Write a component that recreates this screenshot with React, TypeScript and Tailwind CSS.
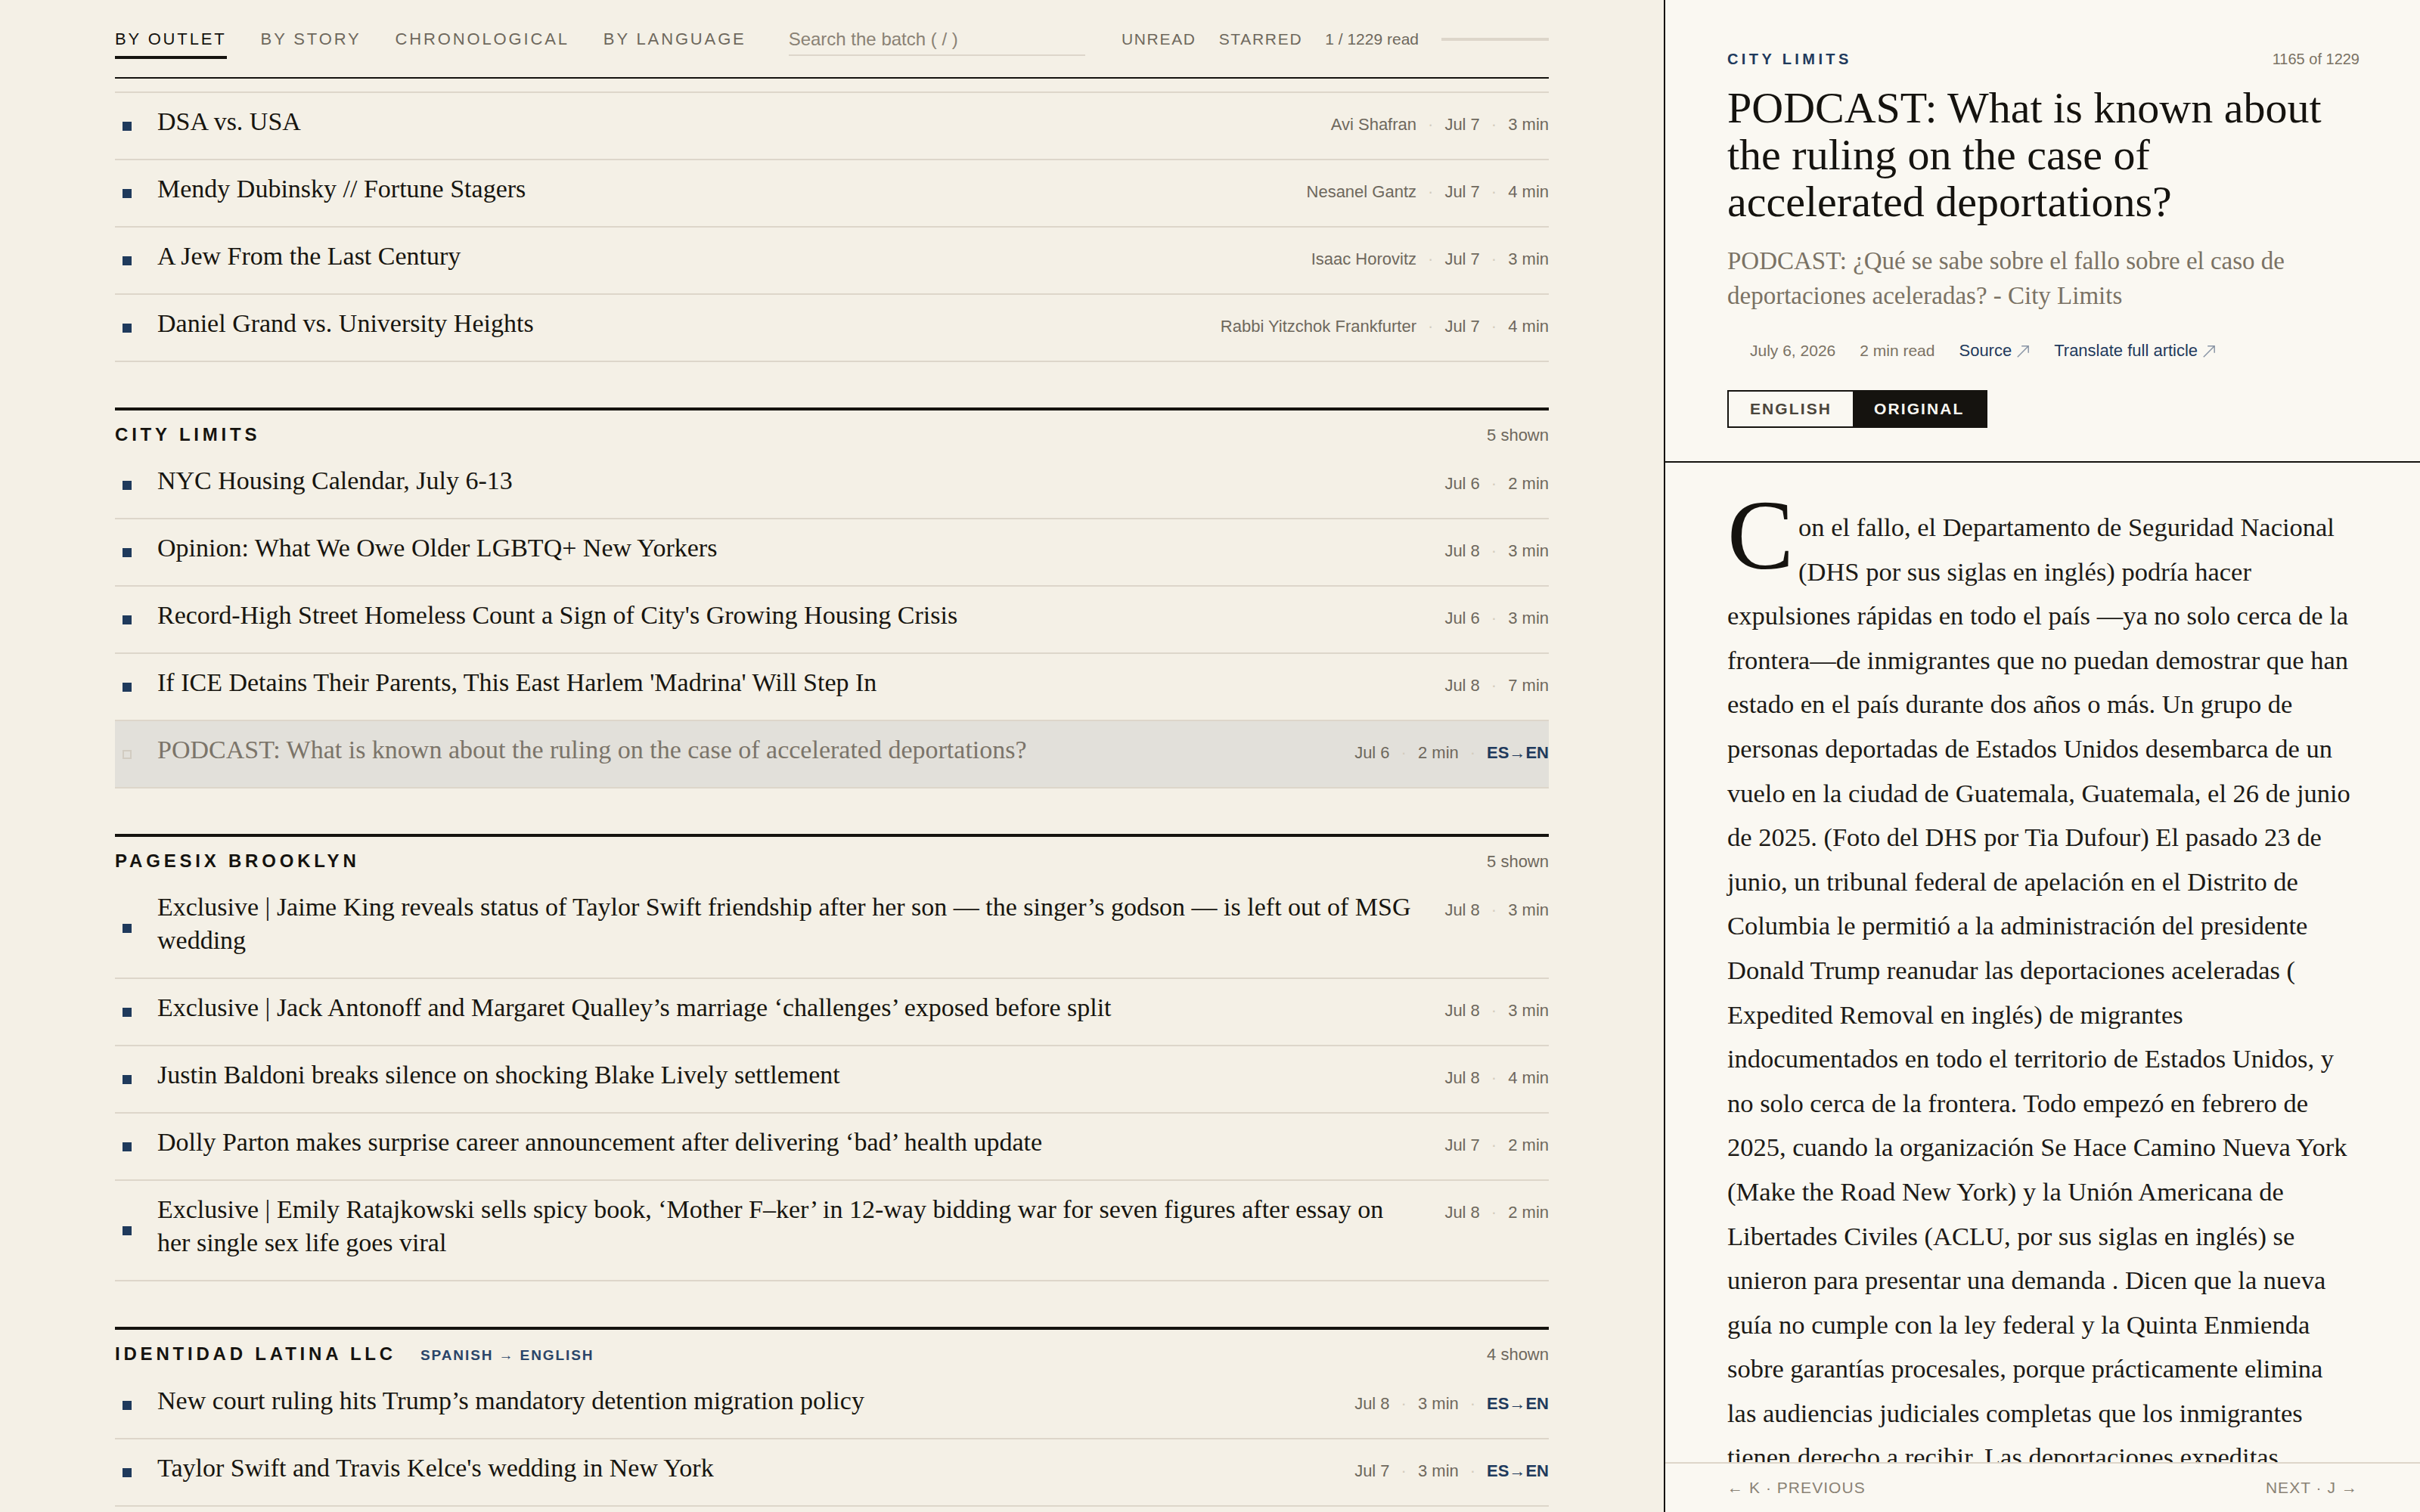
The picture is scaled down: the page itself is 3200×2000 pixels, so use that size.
import React from "react";
import clsx from "clsx";

type Item = {
  title: string;
  author?: string;
  date: string;
  mins: number;
  lang?: boolean;
  active?: boolean;
};

type Group = { name?: string; lang?: string; shown?: string; items: Item[] };

const groups: Group[] = [
  {
    items: [
      { title: "DSA vs. USA", author: "Avi Shafran", date: "Jul 7", mins: 3 },
      { title: "Mendy Dubinsky // Fortune Stagers", author: "Nesanel Gantz", date: "Jul 7", mins: 4 },
      { title: "A Jew From the Last Century", author: "Isaac Horovitz", date: "Jul 7", mins: 3 },
      { title: "Daniel Grand vs. University Heights", author: "Rabbi Yitzchok Frankfurter", date: "Jul 7", mins: 4 },
    ],
  },
  {
    name: "CITY LIMITS",
    shown: "5 shown",
    items: [
      { title: "NYC Housing Calendar, July 6-13", date: "Jul 6", mins: 2 },
      { title: "Opinion: What We Owe Older LGBTQ+ New Yorkers", date: "Jul 8", mins: 3 },
      { title: "Record-High Street Homeless Count a Sign of City's Growing Housing Crisis", date: "Jul 6", mins: 3 },
      { title: "If ICE Detains Their Parents, This East Harlem 'Madrina' Will Step In", date: "Jul 8", mins: 7 },
      {
        title: "PODCAST: What is known about the ruling on the case of accelerated deportations?",
        date: "Jul 6",
        mins: 2,
        lang: true,
        active: true,
      },
    ],
  },
  {
    name: "PAGESIX BROOKLYN",
    shown: "5 shown",
    items: [
      {
        title:
          "Exclusive | Jaime King reveals status of Taylor Swift friendship after her son — the singer’s godson — is left out of MSG wedding",
        date: "Jul 8",
        mins: 3,
      },
      {
        title: "Exclusive | Jack Antonoff and Margaret Qualley’s marriage ‘challenges’ exposed before split",
        date: "Jul 8",
        mins: 3,
      },
      { title: "Justin Baldoni breaks silence on shocking Blake Lively settlement", date: "Jul 8", mins: 4 },
      {
        title: "Dolly Parton makes surprise career announcement after delivering ‘bad’ health update",
        date: "Jul 7",
        mins: 2,
      },
      {
        title:
          "Exclusive | Emily Ratajkowski sells spicy book, ‘Mother F–ker’ in 12-way bidding war for seven figures after essay on her single sex life goes viral",
        date: "Jul 8",
        mins: 2,
      },
    ],
  },
  {
    name: "IDENTIDAD LATINA LLC",
    lang: "SPANISH → ENGLISH",
    shown: "4 shown",
    items: [
      { title: "New court ruling hits Trump’s mandatory detention migration policy", date: "Jul 8", mins: 3, lang: true },
      { title: "Taylor Swift and Travis Kelce's wedding in New York", date: "Jul 7", mins: 3, lang: true },
      { title: "Latino families in Queens seek legal help after new rules", date: "Jul 7", mins: 4, lang: true },
      { title: "Heat wave expected across New York this weekend", date: "Jul 6", mins: 2, lang: true },
    ],
  },
];

const tabs = ["BY OUTLET", "BY STORY", "CHRONOLOGICAL", "BY LANGUAGE"];

function Meta({ item }: { item: Item }) {
  const parts: React.ReactNode[] = [];
  if (item.author) parts.push(<span>{item.author}</span>);
  parts.push(<span>{item.date}</span>);
  parts.push(<span>{item.mins} min</span>);
  if (item.lang) parts.push(<span className="font-bold text-[#1f3a5c]">ES→EN</span>);
  return (
    <span className="flex shrink-0 items-baseline whitespace-nowrap text-[22px] leading-[28px] text-[#6e685d]">
      {parts.map((p, i) => (
        <React.Fragment key={i}>
          {i > 0 && <span className="mx-[15px] text-[#d3ccbe]">·</span>}
          {p}
        </React.Fragment>
      ))}
    </span>
  );
}

function Row({ item }: { item: Item }) {
  return (
    <div className={clsx("flex items-center border-b-2 border-[#ddd6ca]", item.active && "bg-[#e2e0da]")}>
      <span
        className={clsx(
          "ml-[10px] mr-[34px] h-[12px] w-[12px] shrink-0",
          item.active ? "border-2 border-[#d2ccc1]" : "bg-[#1f3a5c]"
        )}
      />
      <div className="flex min-w-0 flex-1 items-baseline gap-8 pb-[27px] pt-[16px]">
        <span
          className={clsx(
            "min-w-0 flex-1 font-['Liberation_Serif',serif] text-[34px] leading-[44px]",
            item.active ? "text-[#7b7469]" : "text-[#17150f]"
          )}
        >
          {item.title}
        </span>
        <Meta item={item} />
      </div>
    </div>
  );
}

function Section({ group }: { group: Group }) {
  if (!group.name) {
    return (
      <div>
        <div className="h-[19px] border-b-2 border-[#ddd6ca]" />
        {group.items.map((it) => (
          <Row key={it.title} item={it} />
        ))}
      </div>
    );
  }
  return (
    <div className="mt-[60px] border-t-4 border-[#15130f]">
      <div className="flex items-baseline justify-between pb-[8px] pt-[18px] leading-[28px]">
        <div className="flex items-baseline gap-8">
          <span className="text-[24px] font-bold tracking-[0.2em] text-[#15130f]">{group.name}</span>
          {group.lang && (
            <span className="text-[19px] font-bold tracking-[0.1em] text-[#2a4569]">{group.lang}</span>
          )}
        </div>
        <span className="text-[22px] text-[#6e685d]">{group.shown}</span>
      </div>
      {group.items.map((it) => (
        <Row key={it.title} item={it} />
      ))}
    </div>
  );
}

function ArrowUpRight() {
  return (
    <svg viewBox="0 0 10 10" className="ml-[6px] inline-block h-[18px] w-[18px]" fill="none" stroke="currentColor" strokeWidth="0.8">
      <path d="M1 9 L9 1 M4 1 H9 V6" />
    </svg>
  );
}

const body =
  "on el fallo, el Departamento de Seguridad Nacional (DHS por sus siglas en inglés) podría hacer expulsiones rápidas en todo el país —ya no solo cerca de la frontera—de inmigrantes que no puedan demostrar que han estado en el país durante dos años o más. Un grupo de personas deportadas de Estados Unidos desembarca de un vuelo en la ciudad de Guatemala, Guatemala, el 26 de junio de 2025. (Foto del DHS por Tia Dufour) El pasado 23 de junio, un tribunal federal de apelación en el Distrito de Columbia le permitió a la administración del presidente Donald Trump reanudar las deportaciones aceleradas ( Expedited Removal en inglés) de migrantes indocumentados en todo el territorio de Estados Unidos, y no solo cerca de la frontera. Todo empezó en febrero de 2025, cuando la organización Se Hace Camino Nueva York (Make the Road New York) y la Unión Americana de Libertades Civiles (ACLU, por sus siglas en inglés) se unieron para presentar una demanda . Dicen que la nueva guía no cumple con la ley federal y la Quinta Enmienda sobre garantías procesales, porque prácticamente elimina las audiencias judiciales completas que los inmigrantes tienen derecho a recibir. Las deportaciones expeditas permitían a los agentes deportar a personas detenidas cerca de la frontera y con poco tiempo en el país.";

export default function App() {
  return (
    <div className="flex h-screen w-full overflow-hidden bg-[#f4f0e6] font-['Liberation_Sans',Arial,sans-serif] text-[#15130f]">
      <main className="flex h-full w-[2200px] shrink-0 flex-col overflow-hidden px-[152px]">
        <header className="flex items-start border-b-2 border-[#15130f] pb-[24px] pt-[38px]">
          <nav className="flex gap-[45px]">
            {tabs.map((t, i) => (
              <span
                key={t}
                className={clsx(
                  "border-b-4 pb-[8px] text-[22px] leading-[28px] tracking-[0.13em]",
                  i === 0 ? "border-[#15130f] text-[#15130f]" : "border-transparent text-[#6e685d]"
                )}
              >
                {t}
              </span>
            ))}
          </nav>
          <input
            placeholder="Search the batch ( / )"
            className="ml-[56px] box-border h-[36px] w-[392px] border-b-2 border-[#ddd6ca] bg-transparent pb-[6px] text-[24px] leading-[28px] outline-none placeholder:text-[#8a8275]"
          />
          <div className="ml-auto flex h-[28px] items-center gap-[30px] text-[21px] text-[#6e685d]">
            <span className="tracking-[0.08em]">UNREAD</span>
            <span className="tracking-[0.08em]">STARRED</span>
            <span>1 / 1229 read</span>
            <div className="h-[4px] w-[142px] bg-[#ddd6ca]" />
          </div>
        </header>
        <div className="min-h-0 flex-1 overflow-hidden">
          {groups.map((g, i) => (
            <Section key={i} group={g} />
          ))}
        </div>
      </main>

      <aside className="flex h-full w-[1000px] shrink-0 flex-col border-l-2 border-[#15130f] bg-[#faf8f2]">
        <header className="border-b-2 border-[#15130f] pb-[44px] pl-[82px] pr-[80px] pt-[64px]">
          <div className="flex items-center justify-between leading-[28px]">
            <span className="text-[20px] font-bold tracking-[0.22em] text-[#1f3a5c]">CITY LIMITS</span>
            <span className="text-[20px] text-[#7a7264]">1165 of 1229</span>
          </div>
          <h1 className="mt-[20px] max-w-[810px] font-['Liberation_Serif',serif] text-[58px] leading-[62px] text-[#15130f]">
            PODCAST: What is known about the ruling on the case of accelerated deportations?
          </h1>
          <p className="mt-[24px] font-['Liberation_Serif',serif] text-[33px] leading-[46px] text-[#7a7264]">
            PODCAST: ¿Qué se sabe sobre el fallo sobre el caso de deportaciones aceleradas? - City Limits
          </p>
          <div className="mt-[34px] flex items-baseline gap-8 pl-[30px] leading-[32px]">
            <span className="text-[21px] text-[#7a7264]">July 6, 2026</span>
            <span className="text-[21px] text-[#7a7264]">2 min read</span>
            <span className="flex items-baseline text-[22px] text-[#1f3a5c]">
              Source
              <span className="text-[#8793a4]">
                <ArrowUpRight />
              </span>
            </span>
            <span className="flex items-baseline text-[22px] text-[#1f3a5c]">
              Translate full article
              <span className="text-[#8793a4]">
                <ArrowUpRight />
              </span>
            </span>
          </div>
          <div className="mt-[36px] inline-flex border-2 border-[#15130f] text-[21px] font-bold tracking-[0.1em]">
            <span className="h-[46px] px-[28px] leading-[46px] text-[#4a453c]">ENGLISH</span>
            <span className="h-[46px] bg-[#15130f] px-[28px] leading-[46px] text-[#faf8f2]">ORIGINAL</span>
          </div>
        </header>
        <div className="min-h-0 flex-1 overflow-hidden pl-[82px] pr-[88px] pt-[56px]">
          <p className="font-['Liberation_Serif',serif] text-[34.5px] leading-[58.6px] text-[#1c1a16]">
            <span className="float-left mr-[6px] mt-[-10px] text-[132px] leading-[100px] text-[#15130f]">C</span>
            {body}
          </p>
        </div>
        <footer className="flex h-[66px] shrink-0 items-center justify-between border-t-2 border-[#ddd6ca] pl-[82px] pr-[82px] text-[21px] tracking-[0.05em] text-[#8a8275]">
          <span>← K · PREVIOUS</span>
          <span>NEXT · J →</span>
        </footer>
      </aside>
    </div>
  );
}
